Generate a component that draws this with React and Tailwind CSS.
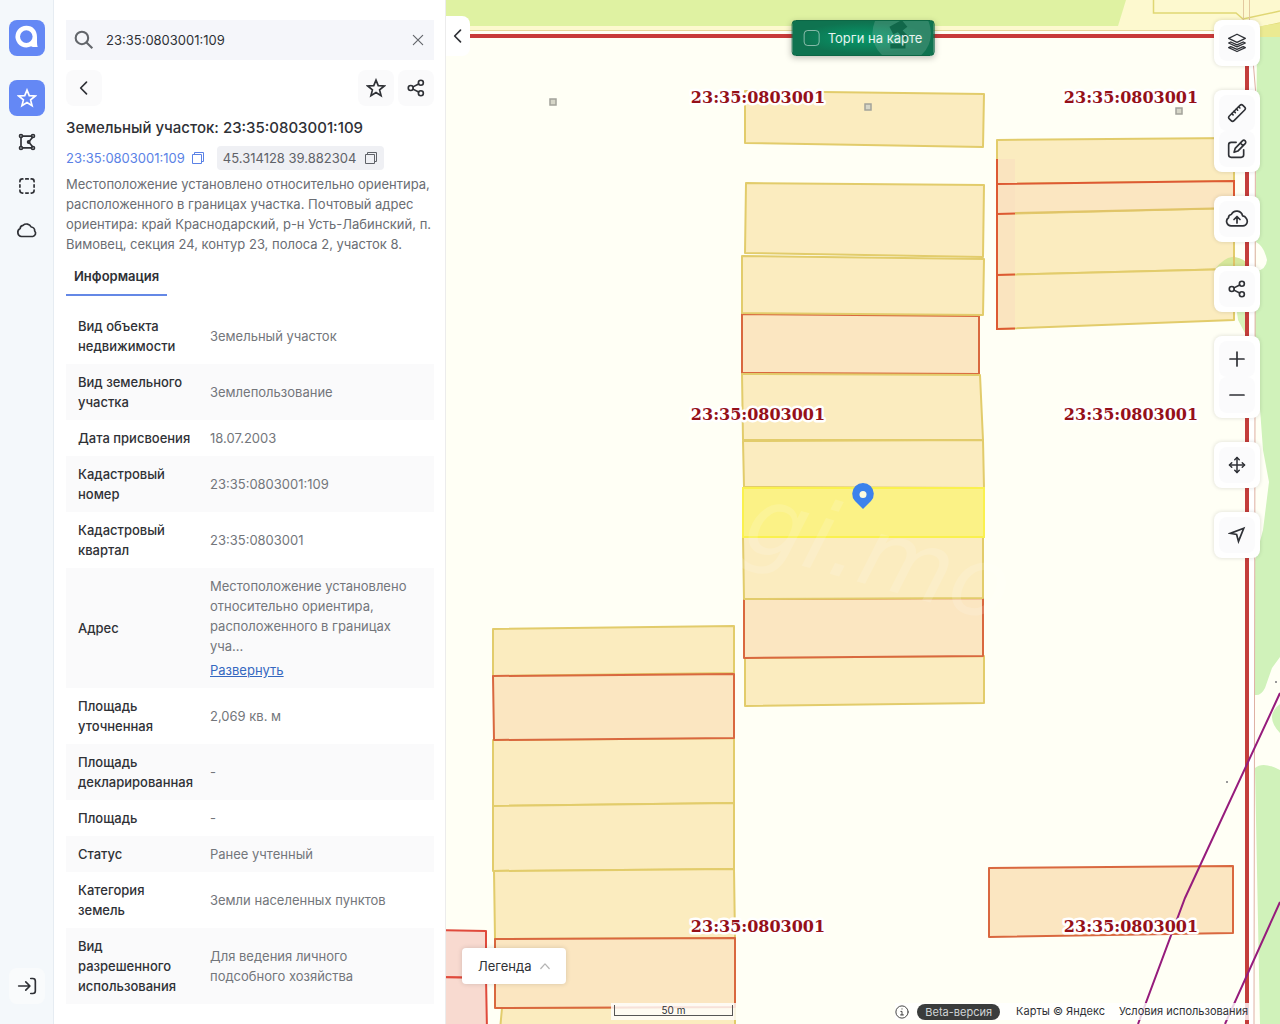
import React from "react";
import { Minus, Move, Plus } from "lucide-react";

const rows = [
  ["Вид объекта недвижимости", "Земельный участок"],
  ["Вид земельного участка", "Землепользование"],
  ["Дата присвоения", "18.07.2003"],
  ["Кадастровый номер", "23:35:0803001:109"],
  ["Кадастровый квартал", "23:35:0803001"],
  ["Адрес", "Местоположение установлено относительно ориентира, расположенного в границах уча...", true],
  ["Площадь уточненная", "2,069 кв. м"],
  ["Площадь декларированная", "-"],
  ["Площадь", "-"],
  ["Статус", "Ранее учтенный"],
  ["Категория земель", "Земли населенных пунктов"],
  ["Вид разрешенного использования", "Для ведения личного подсобного хозяйства"],
];

const YELLOW = { fill: "#fbecbf", stroke: "#e2cc6b" };
const ORANGE = { fill: "#fbe6c1", stroke: "#d9683f" };
const PINK = { fill: "#f8dad0", stroke: "#e04a3c" };

const parcels = [
  ["742,314 979,316 979,374 742,373", ORANGE],
  ["745,658 984,656 984,703 745,706", YELLOW],
  ["744,599 983,598 983,656 744,658", ORANGE],
  ["745,91 984,94 983,147 745,143", YELLOW],
  ["746,183 984,185 983,257 745,253", YELLOW],
  ["742,256 984,259 983,315 742,313", YELLOW],
  ["742,374 980,375 983,440 743,440", YELLOW],
  ["743,441 983,440 984,488 744,487", YELLOW],
  ["743,537 983,537 983,598 744,599", YELLOW],
  ["997,140 1234,138 1234,181 997,184", YELLOW],
  ["997,214 1234,208 1234,269 997,275", YELLOW],
  ["997,275 1234,269 1234,320 997,329", YELLOW],
  ["493,629 734,626 734,673 493,676", YELLOW],
  ["493,740 734,738 734,803 493,806", YELLOW],
  ["493,806 734,803 734,869 493,871", YELLOW],
  ["494,871 734,869 735,938 495,939", YELLOW],
  ["493,676 734,674 734,738 494,740", ORANGE],
  ["502,1008 735,1007 735,1030 500,1030", YELLOW],
  ["495,939 735,938 735,1007 495,1008", ORANGE],
  ["989,868 1233,866 1233,933 989,937", ORANGE],
  ["440,930 486,931 486,978 440,977", PINK],
  ["440,977 486,978 487,1030 440,1030", PINK],
];

const quarterLabels = [
  [758, 103],
  [1131, 103],
  [758, 420],
  [1131, 420],
  [758, 932],
  [1131, 932],
];

const posts = [
  [553, 102],
  [868, 107],
  [1179, 111],
];

function Line({ children, className = "size-5", width = 2, box = 24 }) {
  return (
    <svg
      viewBox={`0 0 ${box} ${box}`}
      className={className}
      fill="none"
      stroke="currentColor"
      strokeWidth={width}
      strokeLinecap="round"
      strokeLinejoin="round"
      aria-hidden="true"
    >
      {children}
    </svg>
  );
}

const StarIcon = () => (
  <Line>
    <path strokeLinejoin="miter" d="M12 2.500l2.700 6.600 7.200.5-5.600 4.600 1.800 7.100-6.100-3.900-6.100 3.900 1.800-7.100L2.100 9.600l7.200-.5z" />
  </Line>
);
const ShareIcon = () => (
  <Line className="size-[18px]" width={2.200}>
    <circle cx="5" cy="12" r="3.300" />
    <circle cx="18.500" cy="5" r="3.300" />
    <circle cx="18.500" cy="19" r="3.300" />
    <path d="M8 10.500l7.500-3.900M8 13.500l7.500 3.900" />
  </Line>
);
const ChevronLeft = () => (
  <Line>
    <path d="M15 5l-7 7 7 7" />
  </Line>
);
const CloudIcon = () => (
  <Line className="size-6" width={1.700}>
    <path d="M6.500 18.500a4.200 4.200 0 0 1-1.400-7.900A3.600 3.600 0 0 1 8 7.300 5.300 5.300 0 0 1 16.200 9a3.800 3.800 0 0 1 3.500 4 3.300 3.300 0 0 1-1.900 5.500z" />
  </Line>
);
const CloudUp = () => (
  <Line className="size-6" width={1.700}>
    <path d="M6 18.800a4.400 4.400 0 0 1-2.500-8A3.300 3.300 0 0 1 6.300 7.500a6 6 0 0 1 11.300 1.400 5 5 0 0 1 3.600 2.300c2.300 3.300.6 7.600-3.200 7.600z" />
    <path d="M12 16v-6M9 12.500l3-3 3 3" />
  </Line>
);
const PolygonIcon = () => (
  <Line>
    <path d="M6.500 5h11M4.800 7v10M6.500 19h11M18.500 6.500L14 12l4.500 5.500" />
    <circle cx="4.800" cy="4.800" r="1.800" />
    <circle cx="19.200" cy="4.800" r="1.800" />
    <circle cx="4.800" cy="19.200" r="1.800" />
    <circle cx="19.200" cy="19.200" r="1.800" />
    <circle cx="14" cy="12" r="1.300" />
  </Line>
);
const SelectIcon = () => (
  <Line>
    <path d="M3.500 7V6.500a3 3 0 0 1 3-3H7M10.500 3.500h3M17 3.500h.5a3 3 0 0 1 3 3V7M20.500 10.500v3M20.500 17v.5a3 3 0 0 1-3 3H17M13.500 20.500h-3M7 20.500h-.5a3 3 0 0 1-3-3V17M3.500 13.500v-3" />
  </Line>
);
const LoginIcon = () => (
  <Line>
    <path d="M2 12h13M10.500 7l5 5-5 5M16.500 3H19a3 3 0 0 1 3 3v12a3 3 0 0 1-3 3h-2.500" />
  </Line>
);
const LayersIcon = () => (
  <Line width={1.600}>
    <path d="M12 1.500L2 6.500l10 4.700 10-4.700z" />
    <path d="M4.500 10.800L2 12l10 4.700L22 12l-2.500-1.200-7.500 3.400zM4.500 16.300L2 17.500l10 4.700 10-4.700-2.500-1.200-7.500 3.400z" />
  </Line>
);
const RulerIcon = () => (
  <Line width={1.900}>
    <rect x="0.500" y="8" width="23" height="8" rx="2.500" transform="rotate(-45 12 12)" />
    <path d="M8.500 10l1.500 1.500M11.300 7.200l1.500 1.500M14 4.500l1.500 1.500M5.800 12.700l1.500 1.500" />
  </Line>
);
const EditIcon = () => (
  <Line>
    <path d="M11 4H5a3 3 0 0 0-3 3v12a3 3 0 0 0 3 3h12a3 3 0 0 0 3-3v-6" />
    <path d="M18.500 2.200a2.300 2.300 0 0 1 3.300 3.300L13 14.500 8.500 16l1.300-4.700zM16 4.800L19.200 8" />
  </Line>
);
const LocateIcon = () => (
  <Line className="size-[18px]" width={2.300}>
    <path strokeLinejoin="miter" d="M21 3L3 9.800l8.500 1.500L14 20.500z" />
  </Line>
);
const CopyIcon = () => (
  <svg viewBox="0 0 14 14" className="size-3.5" fill="none" stroke="currentColor" aria-hidden="true">
    <path d="M1.500 3.500h9v9h-9zM3.500 3.500v-2h9v9h-2" />
  </svg>
);

function MapDrawing() {
  return (
    <svg className="absolute inset-0 size-full" role="img" aria-label="Кадастровая карта">
      <g transform="translate(-446 0)">
        <path d="M446 0H2600V30H446z" fill="#fdf9cf" />
        <path d="M446 0H1126L1118 26H446z" fill="#dff2a2" />
        <path d="M446 30.500H1240" stroke="#e6d89a" />
        <path d="M1153.500 0V13H1236l7 6 37-8M1262 27l18-4" fill="none" stroke="#e0d774" strokeWidth="1.500" />
        <path d="M1256 27l24-4V37H1256z" fill="#ebea92" />
        <path d="M1243.500 0V24M1249.500 0V24" stroke="#e3c9a0" />
        <path d="M1257 37H1280V657l-8 11-7 20q-4 8-10 7V560l8-30 6-48-6-32-8-110z" fill="#d0f2ba" />
        <path d="M1256 242q8 4 11 18-1 10-11 11z" fill="#fffff5" />
        <path d="M1234 290h12v45l-8-15z" fill="#d8f2b8" />
        <path d="M1280 704q-16 12 0 29zM1255 768q8-7 25 2V1024H1260z" fill="#d0f2ba" />
        <path d="M1251 37V1024" stroke="#fff" strokeWidth="7" />
        <path d="M1253 60l2.500 30L1254 1024" stroke="#dfb0a4" fill="none" />
        <path d="M446 36H1240" stroke="#c83a3a" strokeWidth="4" />
        {parcels.map(([points, look]) => (
          <polygon key={points} points={points} fill={look.fill} stroke={look.stroke} strokeWidth="2" strokeLinejoin="round" />
        ))}
        <path d="M1216 268q8-10 16-11 8 0 14 5v8z" fill="#d6e79b" />
        <polygon points="997,184 1234,181 1234,208 997,214" fill="#fbe6c1" />
        <path d="M998 159h17V328h-17z" fill="#fadfc0" fillOpacity="0.6" />
        <path
          d="M997 159V329L1015 328.500M997 184L1234 181V208M997 214l18-.5M997 275l18-.5"
          fill="none"
          stroke="#dd5a33"
          strokeWidth="2"
        />
        <path d="M1015 213L1234 208M1234 256V269" stroke="#e0c468" strokeWidth="2" />
        <polygon points="743,488 984,488 984,537 743,537" fill="#fbf286" stroke="#faf14e" strokeWidth="2" />
        <text
          x="740"
          y="548"
          transform="rotate(16 740 548)"
          fill="#fff"
          fillOpacity="0.140"
          className="font-['DejaVu_Sans'] text-[96px] italic"
        >
          gi.mo
        </text>
        <path d="M1247 60V1024" stroke="#c43e3b" strokeWidth="4" />
        <path d="M1280 693L1185 898L1138 1024M1280 902L1225 1024" fill="none" stroke="#961c7c" strokeWidth="2" />
        <path d="M1226 782h2M1275 682h2" stroke="#999" strokeWidth="2" />
        {quarterLabels.map(([x, y]) => (
          <text
            key={`${x}-${y}`}
            x={x}
            y={y}
            textAnchor="middle"
            fill="#951019"
            stroke="#fff"
            strokeWidth="5"
            strokeLinejoin="round"
            paintOrder="stroke"
            className="font-['DejaVu_Serif'] text-base font-bold"
          >
            23:35:0803001
          </text>
        ))}
        {posts.map(([x, y]) => (
          <rect key={x} x={x - 3} y={y - 3} width="6" height="6" fill="#d6d6c8" stroke="#a3a39a" strokeWidth="1.500" />
        ))}
        <path d="M863 509l-8-8a10.800 10.800 0 1 1 16 0z" fill="#3c82ec" />
        <circle cx="863" cy="494.500" r="3.500" fill="#fdfbe0" />
      </g>
    </svg>
  );
}

function ToolGroup({ tools }) {
  return (
    <div className="flex flex-col rounded-lg bg-white p-[5px] shadow-[0_0_4px_rgba(0,0,0,0.14)]">
      {tools.map(([label, icon]) => (
        <button key={label} aria-label={label} className="flex size-9 items-center justify-center rounded-lg bg-[#fbfbfc]">
          {icon}
        </button>
      ))}
    </div>
  );
}

const railButton = "flex size-9 items-center justify-center rounded-lg";
const softButton = "flex size-9 items-center justify-center rounded-lg bg-[#fafafb]";

export default function App() {
  return (
    <div className="flex h-screen overflow-hidden bg-white font-['Inter','Liberation_Sans',sans-serif] text-[13px] leading-5 text-[#2f3136]">
      <nav className="flex w-[54px] shrink-0 flex-col items-center border-r border-[#e6ecf2] bg-[#f4f8fb] py-5">
        <a href="#home" aria-label="Главная" className="flex size-9 items-center justify-center rounded-lg bg-[#6488f5]">
          <svg viewBox="0 0 36 36" className="size-9" aria-hidden="true">
            <path
              fill="#fff"
              fillRule="evenodd"
              d="M17.500 5.800C24 5.800 28 10.500 28 17V22.500Q28 25.500 28.700 27H24.200Q22.700 27 22.200 26.200A10.800 10.800 0 1 1 17.500 5.800zM17.300 10.300a6.300 6.300 0 1 0 0 12.600 6.300 6.300 0 0 0 0-12.600z"
            />
          </svg>
        </a>
        <div className="mt-6 flex flex-col gap-2">
          <button aria-label="Избранное" className={`${railButton} bg-[#6488f5] text-white`}><StarIcon /></button>
          <button aria-label="Контур" className={railButton}><PolygonIcon /></button>
          <button aria-label="Выделение" className={railButton}><SelectIcon /></button>
          <button aria-label="Облако" className={railButton}><CloudIcon /></button>
        </div>
        <button aria-label="Войти" className={`${railButton} mt-auto bg-[#f9fbfc]`}><LoginIcon /></button>
      </nav>

      <aside className="flex w-[392px] shrink-0 flex-col overflow-hidden border-r border-[#ececec] px-3 pt-5">
        <div className="mr-[-1px] flex h-10 shrink-0 items-center bg-[#f5f6fa]">
          <Line className="ml-2 size-5 shrink-0 text-[#63666b]" width={2.500}>
            <circle cx="9.500" cy="9.500" r="7.500" />
            <path d="M15 15l7 7" strokeLinecap="butt" />
          </Line>
          <input
            aria-label="Поиск"
            defaultValue="23:35:0803001:109"
            className="ml-3 min-w-0 flex-1 bg-transparent outline-none"
          />
          <button aria-label="Очистить" className="flex w-8 items-center justify-center text-[#63666b]">
            <Line className="size-3.5" width={2}>
              <path d="M4 4l16 16M20 4L4 20" />
            </Line>
          </button>
        </div>

        <div className="mt-2.5 mr-[-1px] flex gap-1">
          <button aria-label="Назад" className={`${softButton} mr-auto`}><ChevronLeft /></button>
          <button aria-label="В избранное" className={softButton}><StarIcon /></button>
          <button aria-label="Поделиться" className={softButton}><ShareIcon /></button>
        </div>

        <h1 className="mt-3 text-[15px] leading-5 font-medium">Земельный участок: 23:35:0803001:109</h1>
        <div className="mt-2 flex items-center gap-3">
          <a href="#parcel" className="flex items-center gap-1.5 text-[#5b82e6]">
            23:35:0803001:109
            <CopyIcon />
          </a>
          <button className="flex h-6 items-center gap-2 rounded-sm bg-[#eff0f4] px-1.5 text-[#5f6268]">
            45.314128 39.882304
            <CopyIcon />
          </button>
        </div>
        <p className="mt-1 text-[#6a6d73]">
          Местоположение установлено относительно ориентира, расположенного в границах участка. Почтовый адрес
          ориентира: край Краснодарский, р-н Усть-Лабинский, п. Вимовец, секция 24, контур 23, полоса 2, участок 8.
        </p>
        <div role="tablist" className="mt-2 flex">
          <button role="tab" aria-selected="true" className="border-b-2 border-[#6488e6] px-2 pt-1 pb-2 font-semibold">
            Информация
          </button>
        </div>
        <table className="mt-3 mr-[-1px] table-fixed text-left">
          <tbody>
            {rows.map(([name, value, more]) => (
              <tr key={name} className="even:bg-[#fafafb]">
                <th scope="row" className="w-[132px] py-2 pr-1 pl-3 font-medium">{name}</th>
                <td className="px-3 py-2 text-[#73767b]">
                  {value}
                  {more && (
                    <button className="mt-1 block text-[#3568c0] underline">Развернуть</button>
                  )}
                </td>
              </tr>
            ))}
          </tbody>
        </table>
      </aside>

      <main className="relative flex-1 overflow-hidden bg-[#fffff5]">
        <MapDrawing />

        <button aria-label="Свернуть панель" className="absolute top-4 left-0 flex h-10 w-6 items-center justify-center rounded-r-lg bg-white">
          <ChevronLeft />
        </button>

        <label className="absolute top-5 left-1/2 flex h-9 -translate-x-1/2 items-center gap-2 overflow-hidden rounded-sm border border-[#0c6645] bg-[radial-gradient(ellipse_at_center,#06996b,#0f7350_65%)] px-[11px] whitespace-nowrap text-white/90 shadow-[0_2px_6px_rgba(0,0,0,0.25)]">
          <svg viewBox="0 0 62 36" className="absolute top-0 right-0 h-full w-[62px]" aria-hidden="true">
            <circle cx="30" cy="13" r="31" fill="#fff" fillOpacity="0.140" />
            <path d="M17 6l13-7 6 7-5 4 6 6-4 4-7-8-5 2zM18 24h16v5H18z" fill="#0a5f42" fillOpacity="0.800" />
          </svg>
          <input
            type="checkbox"
            className="relative size-4 appearance-none rounded-sm border border-white/50 checked:bg-white/50"
          />
          <span className="relative">Торги на карте</span>
        </label>

        <div className="absolute top-5 right-5 flex flex-col gap-6">
          <ToolGroup tools={[["Слои", <LayersIcon />]]} />
          <ToolGroup tools={[["Линейка", <RulerIcon />], ["Рисование", <EditIcon />]]} />
          <ToolGroup tools={[["Загрузить", <CloudUp />]]} />
          <ToolGroup tools={[["Поделиться картой", <ShareIcon />]]} />
          <ToolGroup
            tools={[
              ["Приблизить", <Plus className="size-6" strokeWidth={1.700} />],
              ["Отдалить", <Minus className="size-6" strokeWidth={1.700} />],
            ]}
          />
          <ToolGroup tools={[["Переместить", <Move className="size-[18px]" />]]} />
          <ToolGroup tools={[["Моё местоположение", <LocateIcon />]]} />
        </div>

        <button className="absolute bottom-10 left-4 flex h-9 items-center gap-2 rounded-sm bg-white px-4 shadow-[0_0_5px_rgba(0,0,0,0.15)]">
          Легенда
          <Line className="size-2.5 text-[#b5b5b5]" width={3}>
            <path d="M2 18L12 7l10 11" />
          </Line>
        </button>

        <div className="absolute bottom-1 left-[165px] bg-white/80 px-[3px] pt-0.5 pb-1">
          <div className="h-[11px] w-[119px] border border-t-0 border-[#555] text-center text-[10px] leading-[10px]">50 m</div>
        </div>

        <footer className="absolute right-7 bottom-1 flex items-center bg-white/80 pr-1 text-[11px] leading-[17px]">
          <Line className="size-3.5 text-[#444]" width={1.700}>
            <circle cx="12" cy="12" r="10.500" />
            <path d="M12 6.500v.5M10 11h2v6M9.500 17h5" />
          </Line>
          <span className="mr-4 ml-2 h-4 rounded-full bg-[#3a3c3c] px-2 leading-4 text-[#d0d4d6]">Beta-версия</span>
          <a href="#maps" className="mr-3.5">Карты © Яндекс</a>
          <a href="#terms">Условия использования</a>
        </footer>
      </main>
    </div>
  );
}
